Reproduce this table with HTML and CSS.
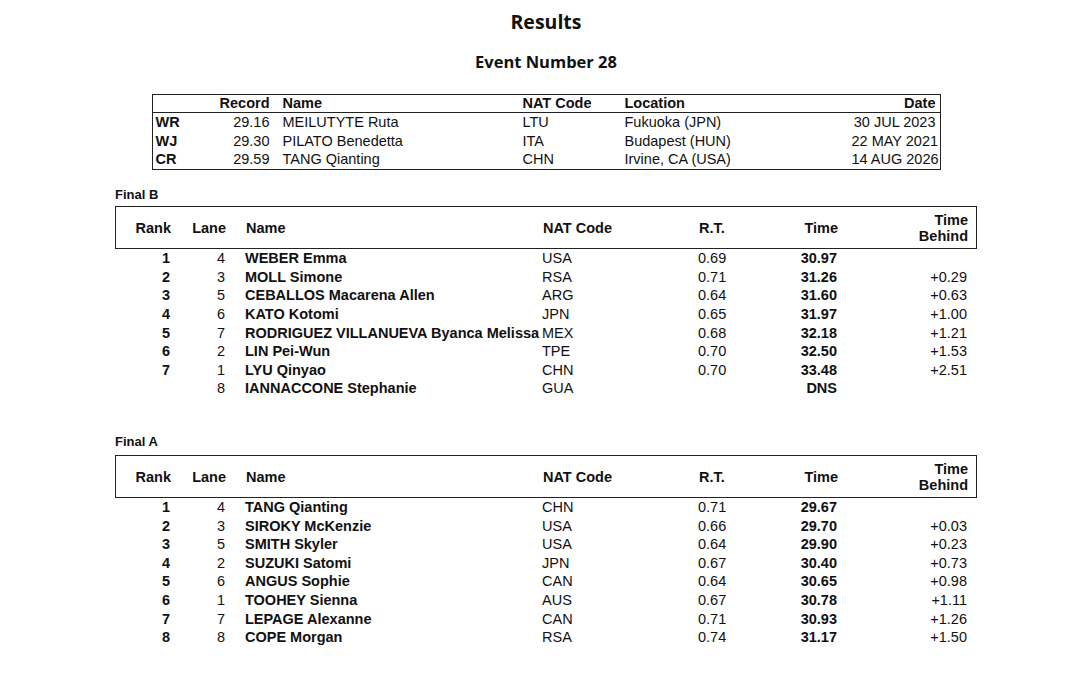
FILE: index.html
```html
<!DOCTYPE html>
<html>
<head>
<meta charset="utf-8">
<link rel="stylesheet" href="styles.css">
</head>
<body>
<div class="page">
  <h1 class="title">Results</h1>
  <h2 class="subtitle">Event Number 28</h2>

  <div class="records">
    <div class="rec-row rec-head">
      <div></div><div class="r">Record</div><div class="nm">Name</div><div>NAT Code</div><div>Location</div><div class="r">Date</div>
    </div>
    <div class="rec-row">
      <div class="b">WR</div><div class="r">29.16</div><div class="nm">MEILUTYTE Ruta</div><div>LTU</div><div>Fukuoka (JPN)</div><div class="r">30 JUL 2023</div>
    </div>
    <div class="rec-row">
      <div class="b">WJ</div><div class="r">29.30</div><div class="nm">PILATO Benedetta</div><div>ITA</div><div>Budapest (HUN)</div><div class="r">22 MAY 2021</div>
    </div>
    <div class="rec-row">
      <div class="b">CR</div><div class="r">29.59</div><div class="nm">TANG Qianting</div><div>CHN</div><div>Irvine, CA (USA)</div><div class="r">14 AUG 2026</div>
    </div>
  </div>

  <section class="final final-b">
    <div class="final-label">Final B</div>
    <div class="res-row res-head">
      <div class="r">Rank</div><div class="r">Lane</div><div class="nm">Name</div><div>NAT Code</div><div>R.T.</div><div class="r">Time</div><div class="r">Time<br>Behind</div>
    </div>
    <div class="res-body">
      <div class="res-row"><div class="r b">1</div><div class="r">4</div><div class="nm b">WEBER Emma</div><div>USA</div><div>0.69</div><div class="r b">30.97</div><div class="r"></div></div>
      <div class="res-row"><div class="r b">2</div><div class="r">3</div><div class="nm b">MOLL Simone</div><div>RSA</div><div>0.71</div><div class="r b">31.26</div><div class="r">+0.29</div></div>
      <div class="res-row"><div class="r b">3</div><div class="r">5</div><div class="nm b">CEBALLOS Macarena Allen</div><div>ARG</div><div>0.64</div><div class="r b">31.60</div><div class="r">+0.63</div></div>
      <div class="res-row"><div class="r b">4</div><div class="r">6</div><div class="nm b">KATO Kotomi</div><div>JPN</div><div>0.65</div><div class="r b">31.97</div><div class="r">+1.00</div></div>
      <div class="res-row"><div class="r b">5</div><div class="r">7</div><div class="nm b">RODRIGUEZ VILLANUEVA Byanca Melissa</div><div>MEX</div><div>0.68</div><div class="r b">32.18</div><div class="r">+1.21</div></div>
      <div class="res-row"><div class="r b">6</div><div class="r">2</div><div class="nm b">LIN Pei-Wun</div><div>TPE</div><div>0.70</div><div class="r b">32.50</div><div class="r">+1.53</div></div>
      <div class="res-row"><div class="r b">7</div><div class="r">1</div><div class="nm b">LYU Qinyao</div><div>CHN</div><div>0.70</div><div class="r b">33.48</div><div class="r">+2.51</div></div>
      <div class="res-row"><div class="r b"></div><div class="r">8</div><div class="nm b">IANNACCONE Stephanie</div><div>GUA</div><div></div><div class="r b">DNS</div><div class="r"></div></div>
    </div>
  </section>

  <section class="final final-a">
    <div class="final-label">Final A</div>
    <div class="res-row res-head">
      <div class="r">Rank</div><div class="r">Lane</div><div class="nm">Name</div><div>NAT Code</div><div>R.T.</div><div class="r">Time</div><div class="r">Time<br>Behind</div>
    </div>
    <div class="res-body">
      <div class="res-row"><div class="r b">1</div><div class="r">4</div><div class="nm b">TANG Qianting</div><div>CHN</div><div>0.71</div><div class="r b">29.67</div><div class="r"></div></div>
      <div class="res-row"><div class="r b">2</div><div class="r">3</div><div class="nm b">SIROKY McKenzie</div><div>USA</div><div>0.66</div><div class="r b">29.70</div><div class="r">+0.03</div></div>
      <div class="res-row"><div class="r b">3</div><div class="r">5</div><div class="nm b">SMITH Skyler</div><div>USA</div><div>0.64</div><div class="r b">29.90</div><div class="r">+0.23</div></div>
      <div class="res-row"><div class="r b">4</div><div class="r">2</div><div class="nm b">SUZUKI Satomi</div><div>JPN</div><div>0.67</div><div class="r b">30.40</div><div class="r">+0.73</div></div>
      <div class="res-row"><div class="r b">5</div><div class="r">6</div><div class="nm b">ANGUS Sophie</div><div>CAN</div><div>0.64</div><div class="r b">30.65</div><div class="r">+0.98</div></div>
      <div class="res-row"><div class="r b">6</div><div class="r">1</div><div class="nm b">TOOHEY Sienna</div><div>AUS</div><div>0.67</div><div class="r b">30.78</div><div class="r">+1.11</div></div>
      <div class="res-row"><div class="r b">7</div><div class="r">7</div><div class="nm b">LEPAGE Alexanne</div><div>CAN</div><div>0.71</div><div class="r b">30.93</div><div class="r">+1.26</div></div>
      <div class="res-row"><div class="r b">8</div><div class="r">8</div><div class="nm b">COPE Morgan</div><div>RSA</div><div>0.74</div><div class="r b">31.17</div><div class="r">+1.50</div></div>
    </div>
  </section>
</div>
</body>
</html>
```

FILE: styles.css
```css
html, body {
  margin: 0;
  padding: 0;
  background: #ffffff;
}

body {
  font-family: "Liberation Sans", Arial, sans-serif;
  font-size: 14.5px;
  color: #111;
}

.page {
  width: 862px;
  margin: 0 auto;
  padding-top: 8px;
}

.title {
  font-family: "Open Sans", Lato, sans-serif;
  font-weight: 700;
  font-size: 19.5px;
  line-height: 28px;
  margin: 0;
  text-align: center;
}

.subtitle {
  font-family: "Open Sans", Lato, sans-serif;
  font-weight: 700;
  font-size: 16.5px;
  line-height: 24px;
  margin: 13.5px 0 0 0;
  text-align: center;
}

.records {
  width: 789px;
  margin: 20.5px auto 0 auto;
  border: 1.5px solid #222;
  box-sizing: border-box;
}

.rec-row {
  display: grid;
  grid-template-columns: 60px 57px 253px 102px 227px 84px;
  line-height: 18.6px;
  white-space: nowrap;
}

.rec-row > div:first-child {
  padding-left: 3px;
}

.rec-head {
  font-weight: 700;
  line-height: 17px;
  border-bottom: 1.5px solid #222;
}

.rec-row .nm {
  padding-left: 13px;
}

.r { text-align: right; }
.b { font-weight: 700; }

.final-label {
  font-weight: 700;
  font-size: 13px;
  line-height: 16px;
}

.final-b {
  margin-top: 17px;
}

.final-a {
  margin-top: 36px;
}

.final-label + .res-head {
  margin-top: 3.5px;
}

.final-a .final-label + .res-head {
  margin-top: 5px;
}

.res-row {
  display: grid;
  grid-template-columns: 55px 55px 317px 156px 77px 62px 130px;
  line-height: 18.6px;
  white-space: nowrap;
}

.res-row .nm {
  padding-left: 20px;
}

.res-head {
  font-weight: 700;
  line-height: 16px;
  border: 1.5px solid #222;
  padding: 4.5px 0;
  align-items: center;
  box-sizing: border-box;
}

.res-head > div:first-child {
  margin-left: -1.5px;
}
```
